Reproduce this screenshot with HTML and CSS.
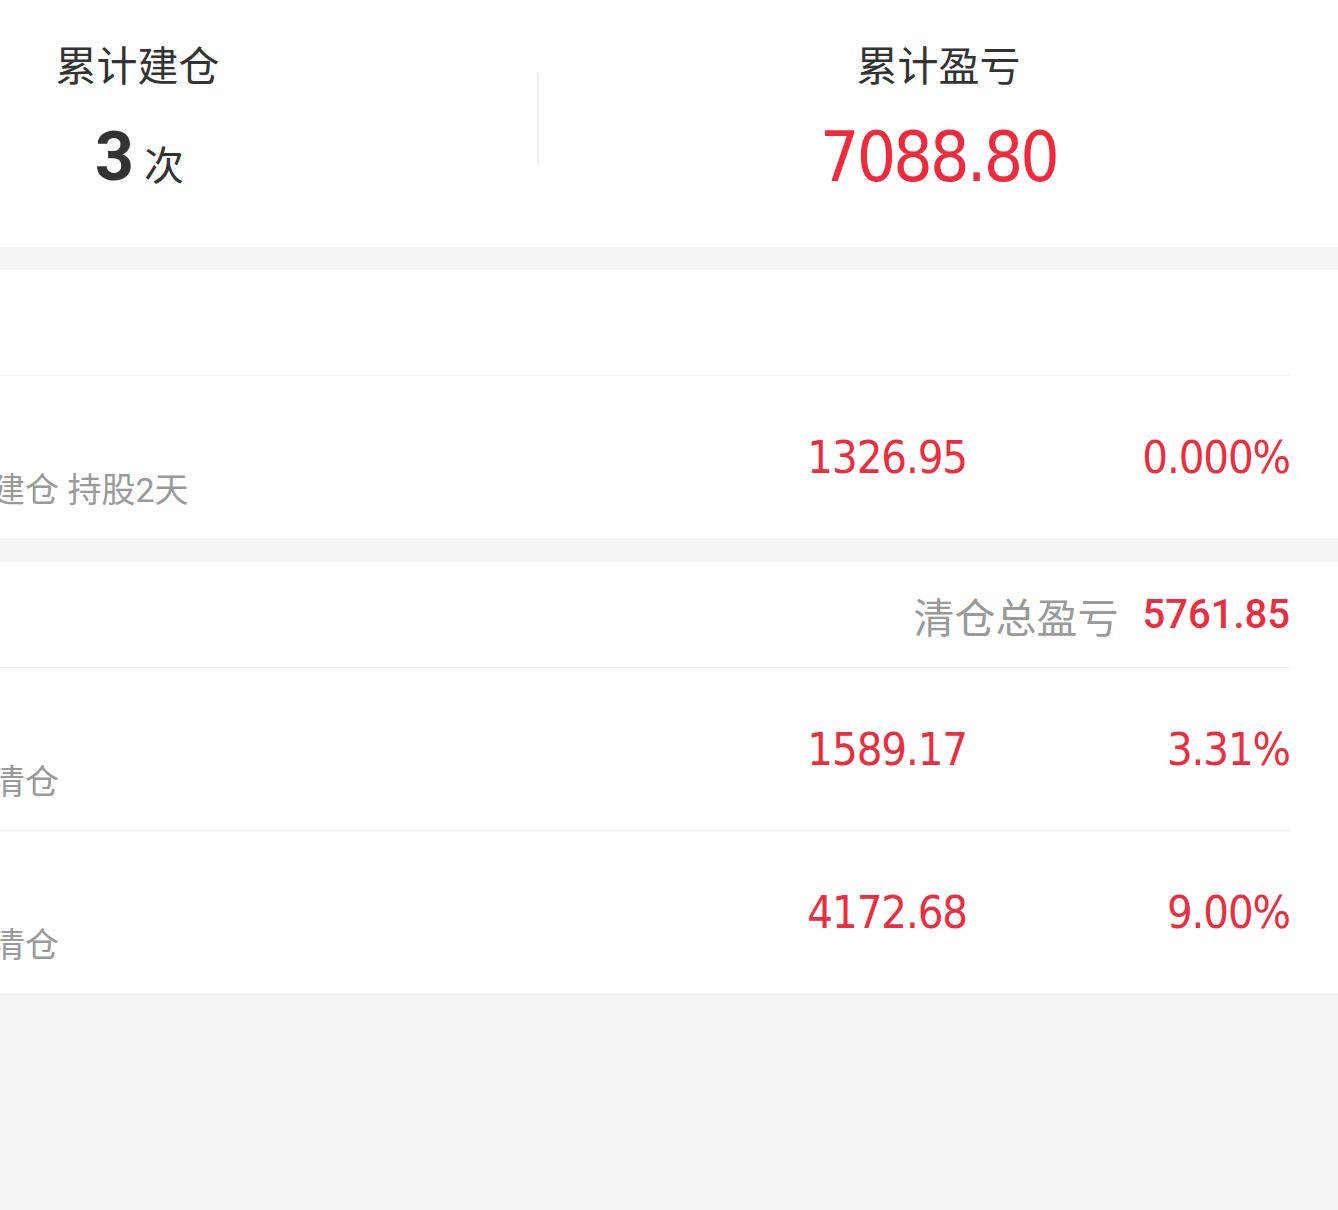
FILE: index.html
```html
<!DOCTYPE html>
<html lang="zh-CN">
<head>
<meta charset="utf-8">
<title>建仓记录</title>
<link rel="stylesheet" href="styles.css">
</head>
<body>
<div class="page">
  <section class="summary">
    <div class="stat">
      <div class="stat-label">累计建仓</div>
      <div class="stat-value"><span class="count">3</span><span class="unit">次</span></div>
    </div>
    <div class="vdivider"></div>
    <div class="stat">
      <div class="stat-label">累计盈亏</div>
      <div class="stat-value"><span class="amount">7088.80</span></div>
    </div>
  </section>

  <section class="card">
    <div class="card-head">
      <span class="card-title">持仓中</span>
    </div>
    <div class="trade">
      <div class="trade-info">
        <div class="trade-name">股票</div>
        <div class="trade-meta"><span class="trade-date">05-20</span>建仓 持股2天</div>
      </div>
      <div class="trade-cell">1326.95</div>
      <div class="trade-cell">0.000%</div>
    </div>
  </section>

  <section class="card">
    <div class="card-head">
      <span class="card-title">已清仓</span>
      <span class="head-total"><span class="head-label">清仓总盈亏</span><span class="head-amount">5761.85</span></span>
    </div>
    <div class="trade">
      <div class="trade-info">
        <div class="trade-name">股票</div>
        <div class="trade-meta"><span class="trade-date">05-10</span>清仓</div>
      </div>
      <div class="trade-cell">1589.17</div>
      <div class="trade-cell">3.31%</div>
    </div>
    <div class="trade">
      <div class="trade-info">
        <div class="trade-name">股票</div>
        <div class="trade-meta"><span class="trade-date">04-28</span>清仓</div>
      </div>
      <div class="trade-cell">4172.68</div>
      <div class="trade-cell">9.00%</div>
    </div>
  </section>
</div>
</body>
</html>
```

FILE: styles.css
```css
html, body {
  margin: 0;
  padding: 0;
}
body {
  background: #f4f4f4;
  overflow: hidden;
  font-family: Roboto, "Noto Sans CJK SC", sans-serif;
  color: #333;
}
.page {
  width: 1600px;
  margin-left: -262px;
}

/* summary */
.summary {
  height: 247px;
  background: #fff;
  display: grid;
  grid-template-columns: 799px 2px 799px;
  align-items: start;
}
.stat {
  display: flex;
  flex-direction: column;
  align-items: center;
  padding-top: 39px;
}
.stat-label {
  font-size: 41px;
  line-height: 56px;
  color: #333;
}
.stat-value {
  margin-top: 22px;
  height: 80px;
  display: flex;
  align-items: baseline;
  justify-content: center;
}
.count {
  font-family: Roboto, sans-serif;
  font-weight: 700;
  font-size: 68px;
  line-height: 80px;
  margin-left: 4px;
  color: #333;
}
.unit {
  font-size: 40px;
  line-height: 80px;
  margin-left: 10px;
  color: #333;
}
.amount {
  font-family: "DejaVu Sans Condensed", "DejaVu Sans", sans-serif;
  font-stretch: condensed;
  font-size: 69px;
  line-height: 80px;
  letter-spacing: -2.8px;
  color: #f0293c;
}
.vdivider {
  align-self: start;
  margin-top: 73px;
  height: 92px;
  background: #eeeeee;
}

/* cards */
.card {
  background: #fff;
  margin-top: 23px;
}
.card + .card {
  margin-top: 24px;
}
.card-head {
  margin: 0 48px;
  height: 105px;
  border-bottom: 1px solid #eeeeee;
  display: flex;
  align-items: center;
  justify-content: space-between;
}
.card-title {
  font-size: 40px;
  color: #333;
}
.head-total {
  display: flex;
  align-items: center;
}
.head-label {
  font-size: 41px;
  color: #999;
}
.head-amount {
  font-family: Roboto, sans-serif;
  font-weight: 500;
  font-size: 40px;
  color: #eb2d3d;
  margin-left: 24px;
}
.trade {
  margin: 0 48px;
  height: 162px;
  display: flex;
  align-items: center;
  border-bottom: 1px solid #eeeeee;
}
.trade:last-child {
  border-bottom: 0;
}
.trade-info {
  flex: 1;
  align-self: flex-start;
  padding-top: 30px;
}
.trade-name {
  font-size: 38px;
  line-height: 50px;
  color: #333;
}
.trade-meta {
  margin-top: 11px;
  font-size: 34px;
  line-height: 46px;
  color: #999;
  white-space: nowrap;
}
.trade-date {
  display: inline-block;
  width: 205px;
}
.trade-cell {
  width: 323px;
  text-align: right;
  font-family: "DejaVu Sans Condensed", "DejaVu Sans", sans-serif;
  font-stretch: condensed;
  font-size: 45px;
  letter-spacing: -1.1px;
  color: #eb2d3d;
}
```
